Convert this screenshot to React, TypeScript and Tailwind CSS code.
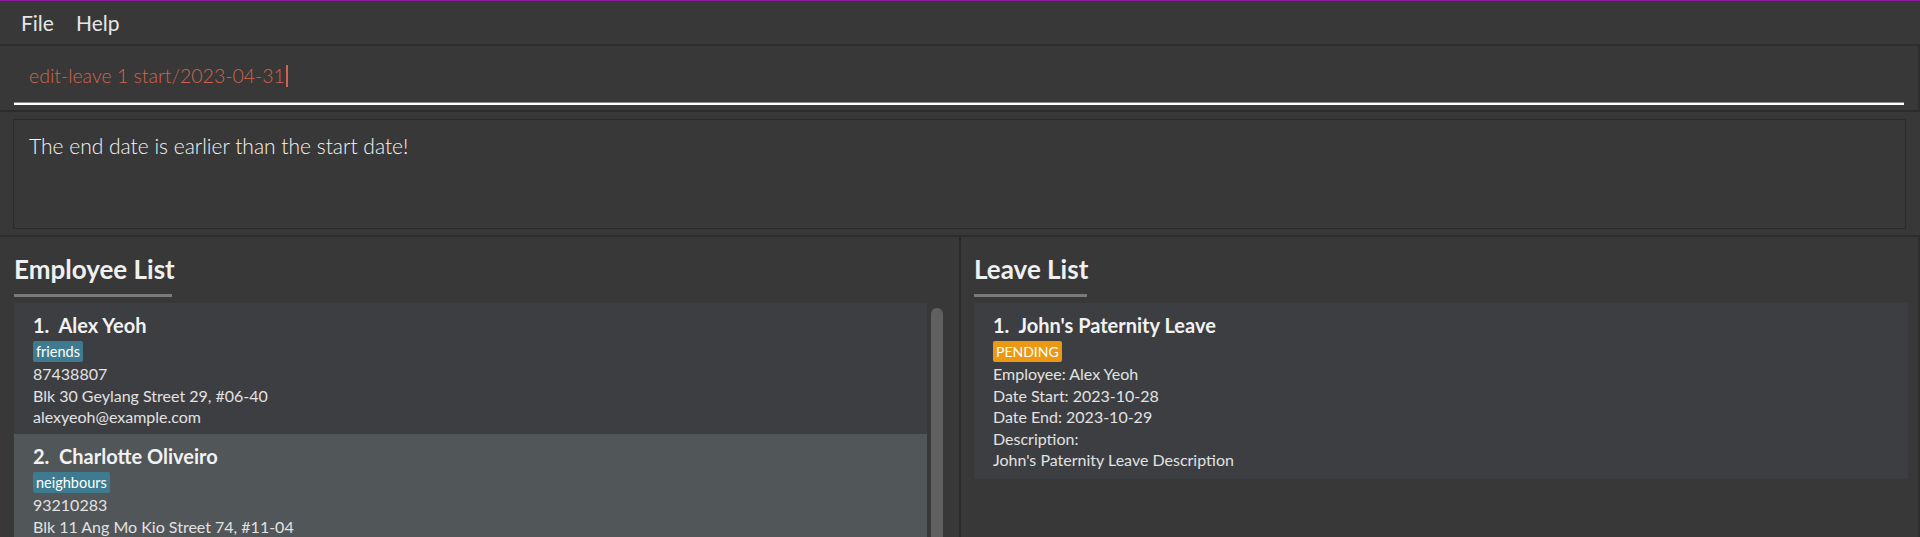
import React from "react";

const employees = [
  {
    name: "Alex Yeoh",
    tag: "friends",
    phone: "87438807",
    address: "Blk 30 Geylang Street 29, #06-40",
    email: "alexyeoh@example.com",
    selected: false,
  },
  {
    name: "Charlotte Oliveiro",
    tag: "neighbours",
    phone: "93210283",
    address: "Blk 11 Ang Mo Kio Street 74, #11-04",
    email: "charlotte@example.com",
    selected: true,
  },
];

const font = { fontFamily: "Lato, 'Open Sans', sans-serif" };

function PanelTitle({ text, width }: { text: string; width: string }) {
  return (
    <div className="pt-[15px] pb-[6px]">
      <div className="text-[26px] font-bold leading-[34px] text-[#f0f0f0]">{text}</div>
      <div className={`mt-[8px] h-[3px] bg-[#7a7a7a] ${width}`} />
    </div>
  );
}

export default function App() {
  return (
    <div className="flex h-[537px] w-full flex-col overflow-hidden bg-[#383838]" style={font}>
      <div className="h-[1px] bg-[#8d1b9e]" />

      {/* menu bar */}
      <div className="flex h-[45px] items-center gap-[22px] border-b-2 border-[#2e2e2e] pl-[21px] text-[21px] text-[#e6e6e6]">
        <span>File</span>
        <span>Help</span>
      </div>

      {/* command box */}
      <div className="h-[64px] border-r-2 border-[#2e2e2e] px-[14px] pt-[18px]">
        <div className="flex h-[24px] items-center pl-[15px] text-[19.5px] font-light text-[#d0654f]">
          edit-leave 1 start/2023-04-31
          <span className="ml-[1px] h-[22px] w-[2px] bg-[#d0654f]" />
        </div>
        <div className="mt-[14px] h-[1px] bg-[#8a8a8a]" />
        <div className="h-[2px] bg-white" />
      </div>

      {/* result display */}
      <div className="border-y-2 border-[#2c2c2c] px-[13px] pt-[7px] pb-[6px] pr-[14px]">
        <div className="h-[110px] border border-[#2b2b2b] px-[15px] pt-[10px] text-[21px] font-light text-[#f4f4f4]">
          The end date is earlier than the start date!
        </div>
      </div>

      {/* lists */}
      <div className="flex min-h-0 flex-1">
        <div className="flex w-[959px] flex-col pl-[14px] pr-[16px]">
          <PanelTitle text="Employee List" width="w-[158px]" />
          <div className="flex min-h-0 flex-1 gap-[4px]">
            <div className="flex-1">
              {employees.map((e, i) => (
                <div
                  key={e.name}
                  className={`px-[19px] pt-[9px] ${e.selected ? "bg-[#515658]" : "bg-[#3d3e41]"} h-[131px]`}
                >
                  <div className="text-[20px] font-bold leading-[26px] text-[#f2f2f2]">
                    {i + 1}.&nbsp;&nbsp;{e.name}
                  </div>
                  <span className="mt-[3px] inline-block rounded-[2px] bg-[#3e7b91] px-[3px] text-[14.5px] leading-[21px] text-white">
                    {e.tag}
                  </span>
                  <div className="text-[16px] leading-[21.5px] text-[#e2e2e2]">
                    <div>{e.phone}</div>
                    <div>{e.address}</div>
                    <div>{e.email}</div>
                  </div>
                </div>
              ))}
            </div>
            <div className="mt-[5px] w-[12px] rounded-t-[6px] bg-[#606060]" />
          </div>
        </div>

        <div className="w-[2px] bg-[#2a2a2a]" />

        <div className="flex flex-1 flex-col border-r-2 border-[#2e2e2e] pl-[13px] pr-[10px]">
          <PanelTitle text="Leave List" width="w-[113px]" />
          <div className="h-[176px] bg-[#3d3e41] px-[19px] pt-[9px]">
            <div className="text-[20px] font-bold leading-[26px] text-[#f2f2f2]">
              1.&nbsp;&nbsp;John's Paternity Leave
            </div>
            <span className="mt-[3px] inline-block rounded-[2px] bg-[#ec9812] px-[3px] text-[14px] leading-[21px] text-white">
              PENDING
            </span>
            <div className="text-[16px] leading-[21.5px] text-[#e2e2e2]">
              <div>Employee: Alex Yeoh</div>
              <div>Date Start: 2023-10-28</div>
              <div>Date End: 2023-10-29</div>
              <div>Description:</div>
              <div>John's Paternity Leave Description</div>
            </div>
          </div>
        </div>
      </div>
    </div>
  );
}
